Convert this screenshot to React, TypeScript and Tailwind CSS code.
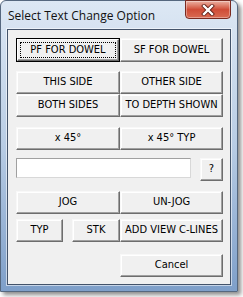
import React from "react";

const FONT = "font-['DejaVu_Sans_Condensed','DejaVu_Sans',sans-serif] font-stretch-condensed";

function Btn({
  children,
  className = "",
  def = false,
}: {
  children?: React.ReactNode;
  className?: string;
  def?: boolean;
}) {
  if (def) {
    return (
      <div className={`border border-black ${className}`}>
        <div
          className={`relative flex h-full w-full items-center justify-center bg-[#f0f0f0] border border-t-white border-l-white border-r-[#696969] border-b-[#696969] shadow-[inset_-1px_-1px_0_#a0a0a0] text-[11px] text-black ${FONT}`}
        >
          <div className="absolute inset-[2px] border border-dotted border-black" />
          <span className="relative">{children}</span>
        </div>
      </div>
    );
  }
  return (
    <div
      className={`flex items-center justify-center bg-[#f0f0f0] border border-t-[#f8f8f8] border-l-[#f8f8f8] border-r-[#6d6d6d] border-b-[#6d6d6d] shadow-[inset_-1px_-1px_0_#a0a0a0,inset_1px_1px_0_#ffffff] text-[11px] text-black ${FONT} ${className}`}
    >
      {children}
    </div>
  );
}

export default function App() {
  return (
    <div className="relative h-[297px] w-[243px] overflow-hidden bg-white">
      <div className="relative h-[292px] w-[238px] rounded-t-[6px] border border-[#56687f] bg-gradient-to-b from-[#dde8f4] via-[#b8cce4] to-[#7e9fc9] shadow-[3px_3px_4px_rgba(0,0,0,0.45)]">
        {/* title bar */}
        <div className="flex h-[28px] items-center pl-[7px] pt-[1px] font-['Open_Sans','Noto_Sans',sans-serif] text-[12px] text-[#111]">
          Select Text Change Option
        </div>
        {/* close button */}
        <div className="absolute right-[6px] top-[-1px] flex h-[19px] w-[46px] items-center justify-center rounded-b-[4px] border border-[#7a2a20] bg-gradient-to-b from-[#eab0a2] via-[#cf4c37] to-[#d96a52] shadow-[inset_0_0_0_1px_rgba(255,255,255,0.35)]">
          <svg width="14" height="12" viewBox="0 0 14 12">
            <path d="M3 2 L11 10 M11 2 L3 10" stroke="#5a1a12" strokeWidth="4" strokeLinecap="square" />
            <path d="M3 2 L11 10 M11 2 L3 10" stroke="#ffffff" strokeWidth="2.4" strokeLinecap="square" />
          </svg>
        </div>
        {/* client area */}
        <div className="ml-[6px] h-[256px] w-[224px] border border-[#43536a] bg-[#f0f0f0] shadow-[0_0_0_1px_rgba(255,255,255,0.55)]">
          <div className="flex flex-col pl-[8px] pt-[8px]">
            <div className="flex">
              <Btn def className="h-[24px] w-[104px]">PF FOR DOWEL</Btn>
              <Btn className="h-[24px] w-[103px]">SF FOR DOWEL</Btn>
            </div>
            <div className="mt-[9px] flex">
              <Btn className="h-[23px] w-[104px]">THIS SIDE</Btn>
              <Btn className="h-[23px] w-[103px]">OTHER SIDE</Btn>
            </div>
            <div className="flex">
              <Btn className="h-[23px] w-[104px]">BOTH SIDES</Btn>
              <Btn className="h-[23px] w-[103px]">TO DEPTH SHOWN</Btn>
            </div>
            <div className="mt-[10px] flex">
              <Btn className="h-[23px] w-[104px]">x 45°</Btn>
              <Btn className="h-[23px] w-[103px]">x 45° TYP</Btn>
            </div>
            <div className="mt-[8px] flex items-start">
              <div className="h-[20px] w-[175px] border border-t-[#a0a0a0] border-l-[#a0a0a0] border-r-[#d8d8d8] border-b-[#d8d8d8] bg-white" />
              <Btn className="ml-[9px] h-[23px] w-[23px]">?</Btn>
            </div>
            <div className="mt-[10px] flex">
              <Btn className="h-[23px] w-[104px]">JOG</Btn>
              <Btn className="h-[23px] w-[103px]">UN-JOG</Btn>
            </div>
            <div className="mt-[5px] flex">
              <Btn className="h-[23px] w-[47px]">TYP</Btn>
              <Btn className="ml-[9px] h-[23px] w-[48px]">STK</Btn>
              <Btn className="h-[23px] w-[103px]">ADD VIEW C-LINES</Btn>
            </div>
            <div className="mt-[12px] flex pl-[104px]">
              <Btn className="h-[23px] w-[103px]">Cancel</Btn>
            </div>
          </div>
        </div>
      </div>
    </div>
  );
}
